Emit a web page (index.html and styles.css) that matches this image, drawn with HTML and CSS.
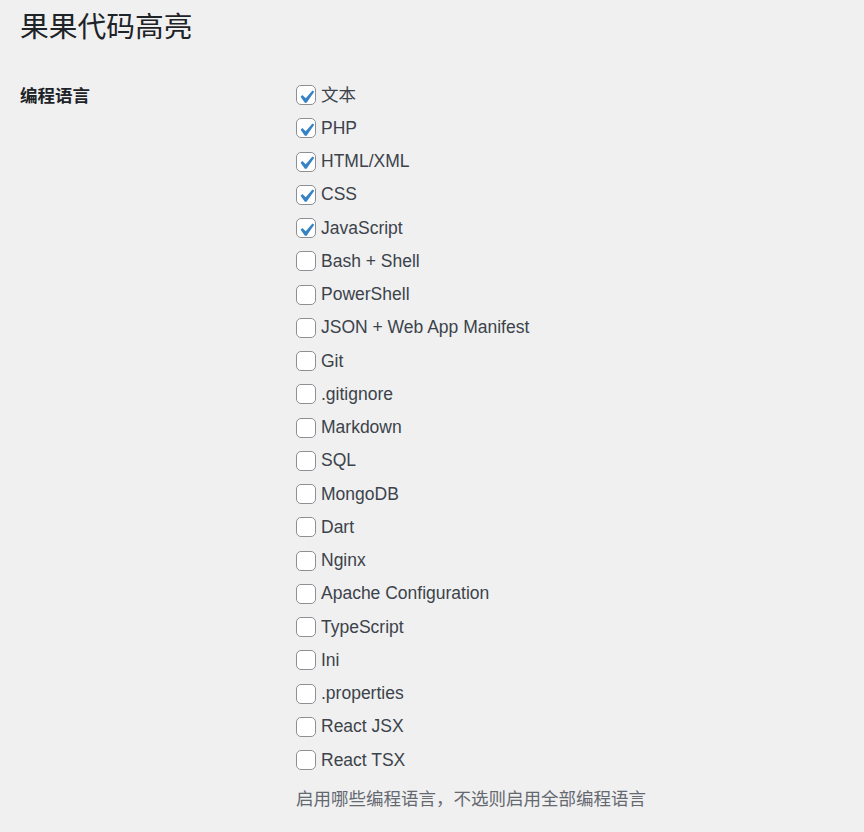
FILE: index.html
```html
<!DOCTYPE html>
<html lang="zh-CN">
<head>
<meta charset="utf-8">
<title>果果代码高亮</title>
<link rel="stylesheet" href="styles.css">
</head>
<body>
<div class="wrap">
  <h1 class="title">果果代码高亮</h1>
  <div class="form-row">
    <div class="th">编程语言</div>
    <div class="td">
      <label class="opt"><span class="box checked"><svg viewBox="0 0 20 20"><path d="M14.83 4.89l1.34.94-5.81 8.38H9.02L5.78 9.67l1.34-1.25 2.57 2.4z"/></svg></span>文本</label>
      <label class="opt"><span class="box checked"><svg viewBox="0 0 20 20"><path d="M14.83 4.89l1.34.94-5.81 8.38H9.02L5.78 9.67l1.34-1.25 2.57 2.4z"/></svg></span>PHP</label>
      <label class="opt"><span class="box checked"><svg viewBox="0 0 20 20"><path d="M14.83 4.89l1.34.94-5.81 8.38H9.02L5.78 9.67l1.34-1.25 2.57 2.4z"/></svg></span>HTML/XML</label>
      <label class="opt"><span class="box checked"><svg viewBox="0 0 20 20"><path d="M14.83 4.89l1.34.94-5.81 8.38H9.02L5.78 9.67l1.34-1.25 2.57 2.4z"/></svg></span>CSS</label>
      <label class="opt"><span class="box checked"><svg viewBox="0 0 20 20"><path d="M14.83 4.89l1.34.94-5.81 8.38H9.02L5.78 9.67l1.34-1.25 2.57 2.4z"/></svg></span>JavaScript</label>
      <label class="opt"><span class="box"></span>Bash + Shell</label>
      <label class="opt"><span class="box"></span>PowerShell</label>
      <label class="opt"><span class="box"></span>JSON + Web App Manifest</label>
      <label class="opt"><span class="box"></span>Git</label>
      <label class="opt"><span class="box"></span>.gitignore</label>
      <label class="opt"><span class="box"></span>Markdown</label>
      <label class="opt"><span class="box"></span>SQL</label>
      <label class="opt"><span class="box"></span>MongoDB</label>
      <label class="opt"><span class="box"></span>Dart</label>
      <label class="opt"><span class="box"></span>Nginx</label>
      <label class="opt"><span class="box"></span>Apache Configuration</label>
      <label class="opt"><span class="box"></span>TypeScript</label>
      <label class="opt"><span class="box"></span>Ini</label>
      <label class="opt"><span class="box"></span>.properties</label>
      <label class="opt"><span class="box"></span>React JSX</label>
      <label class="opt"><span class="box"></span>React TSX</label>
      <p class="description">启用哪些编程语言，不选则启用全部编程语言</p>
    </div>
  </div>
</div>
</body>
</html>
```

FILE: styles.css
```css
html, body {
  margin: 0;
  padding: 0;
  background: #f0f0f1;
}
body {
  font-family: "Segoe UI", "Liberation Sans", "Noto Sans CJK SC", sans-serif;
  color: #3c434a;
  font-size: 17.5px;
}
.wrap {
  padding: 0 20px;
}
.title {
  margin: 0;
  padding-top: 9px;
  font-size: 28.75px;
  line-height: 37.4px;
  font-weight: 400;
  color: #1d2327;
  font-family: "Liberation Sans", "Noto Sans CJK SC", sans-serif;
}
.form-row {
  display: grid;
  grid-template-columns: 276px 1fr;
  margin-top: 32px;
}
.th {
  padding-top: 7px;
  font-weight: 700;
  color: #1d2327;
  line-height: 22.75px;
}
.td {
  display: flex;
  flex-direction: column;
}
.opt {
  display: flex;
  align-items: center;
  height: 33.25px;
  line-height: 22.75px;
}
.box {
  position: relative;
  box-sizing: border-box;
  width: 20px;
  height: 20px;
  border: 1.25px solid #8c8f94;
  border-radius: 5px;
  background: #fff;
  margin-right: 5px;
  flex: none;
}
.box svg {
  position: absolute;
  left: -3.75px;
  top: -2.5px;
  width: 26.25px;
  height: 26.25px;
  fill: #3582c4;
}
.description {
  margin: 11px 0 0;
  color: #646970;
  line-height: 22.75px;
}
```
